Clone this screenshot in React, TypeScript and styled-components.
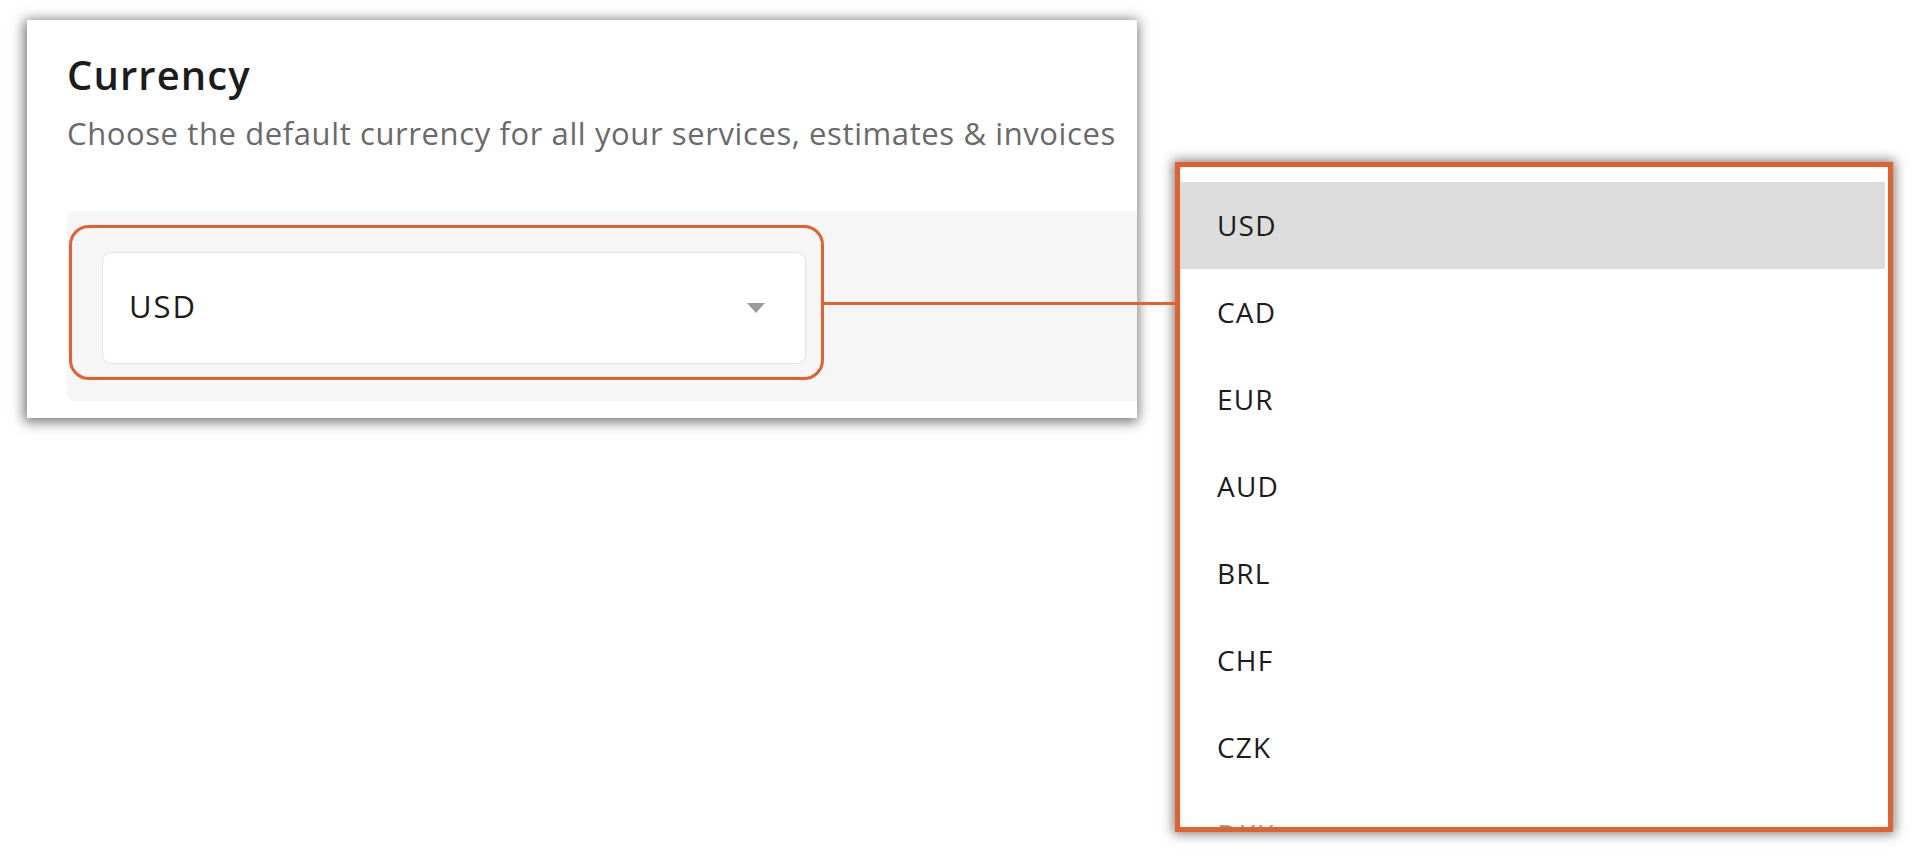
import React from 'react';
import styled, { createGlobalStyle } from 'styled-components';

const GlobalStyle = createGlobalStyle`
  html, body {
    margin: 0;
    padding: 0;
    background: #ffffff;
  }

  body {
    font-family: "Open Sans", "Noto Sans", Arial, sans-serif;
    color: #1c1c1c;
  }
`;

const ORANGE = '#e3612f';

const Page = styled.div`
  display: flex;
  align-items: flex-start;
  gap: 38px;
  padding: 20px 0 0 27px;
  width: 1914px;
  height: 860px;
  box-sizing: border-box;
  overflow: hidden;
`;

const SettingsCard = styled.section`
  display: flex;
  flex-direction: column;
  width: 1110px;
  height: 398px;
  box-sizing: border-box;
  padding: 31px 0 16px 40px;
  background: #ffffff;
  box-shadow: -1px 2px 12px 2px rgba(0, 0, 0, 0.55);
`;

const Title = styled.h2`
  margin: 0;
  font-size: 40px;
  line-height: 48px;
  font-weight: 600;
  color: #1c1c1c;
  letter-spacing: 1.1px;
`;

const Subtitle = styled.p`
  margin: 14px 0 0;
  font-size: 31px;
  line-height: 40px;
  font-weight: 400;
  color: #6a6a6a;
  letter-spacing: 0.6px;
  white-space: nowrap;
`;

const FieldPanel = styled.div`
  margin-top: 58px;
  height: 190px;
  box-sizing: border-box;
  padding: 14px 0 0 2px;
  background: #f6f6f6;
  border-radius: 8px 0 0 8px;
`;

const Highlight = styled.div`
  position: relative;
  width: 755px;
  height: 155px;
  box-sizing: border-box;
  padding: 24px 15px 13px 30px;
  border: 3px solid ${ORANGE};
  border-radius: 20px;

  /* connector line to the open menu */
  &::after {
    content: '';
    position: absolute;
    z-index: 1;
    left: 100%;
    top: 74px;
    width: 356px;
    height: 3px;
    background: ${ORANGE};
  }
`;

const SelectBox = styled.div`
  display: flex;
  align-items: center;
  justify-content: space-between;
  height: 100%;
  box-sizing: border-box;
  padding: 0 40px 4px 26px;
  background: #ffffff;
  border: 1px solid #e2e2e2;
  border-radius: 9px;
`;

const SelectValue = styled.span`
  font-size: 31px;
  letter-spacing: 2px;
  color: #1c1c1c;
`;

const Caret = styled.svg`
  width: 18px;
  height: 10px;
  margin-top: 4px;
  fill: #9b9b9b;
`;

const Menu = styled.div`
  margin-top: 142px;
  width: 718px;
  height: 670px;
  box-sizing: border-box;
  border: 5px solid ${ORANGE};
  background: #ffffff;
  box-shadow: 0 0 11px 2px rgba(0, 0, 0, 0.5);
`;

const MenuList = styled.ul`
  list-style: none;
  margin: 0;
  padding: 15px 0 0;
  height: 100%;
  box-sizing: border-box;
  overflow: hidden;
  border-radius: 0 0 4px 4px;
`;

const MenuItem = styled.li<{ $active?: boolean; $faded?: boolean }>`
  height: 87px;
  margin-right: 3px;
  padding-left: 37px;
  font-size: 28px;
  line-height: 87px;
  letter-spacing: 1.2px;
  color: ${(p) => (p.$faded ? '#9a9a9a' : '#1c1c1c')};
  background: ${(p) => (p.$active ? '#dcdcdc' : 'transparent')};
`;

const currencies = ['USD', 'CAD', 'EUR', 'AUD', 'BRL', 'CHF', 'CZK', 'DKK'];

const App = () => {
  return (
    <>
      <GlobalStyle />
      <Page>
        <SettingsCard>
          <Title>Currency</Title>
          <Subtitle>Choose the default currency for all your services, estimates &amp; invoices</Subtitle>
          <FieldPanel>
            <Highlight>
              <SelectBox>
                <SelectValue>USD</SelectValue>
                <Caret viewBox="0 0 18 10">
                  <polygon points="0,0 18,0 9,10" />
                </Caret>
              </SelectBox>
            </Highlight>
          </FieldPanel>
        </SettingsCard>
        <Menu>
          <MenuList>
            {currencies.map((c, i) => (
              <MenuItem key={c} $active={i === 0} $faded={i === currencies.length - 1}>
                {c}
              </MenuItem>
            ))}
          </MenuList>
        </Menu>
      </Page>
    </>
  );
};

export default App;
